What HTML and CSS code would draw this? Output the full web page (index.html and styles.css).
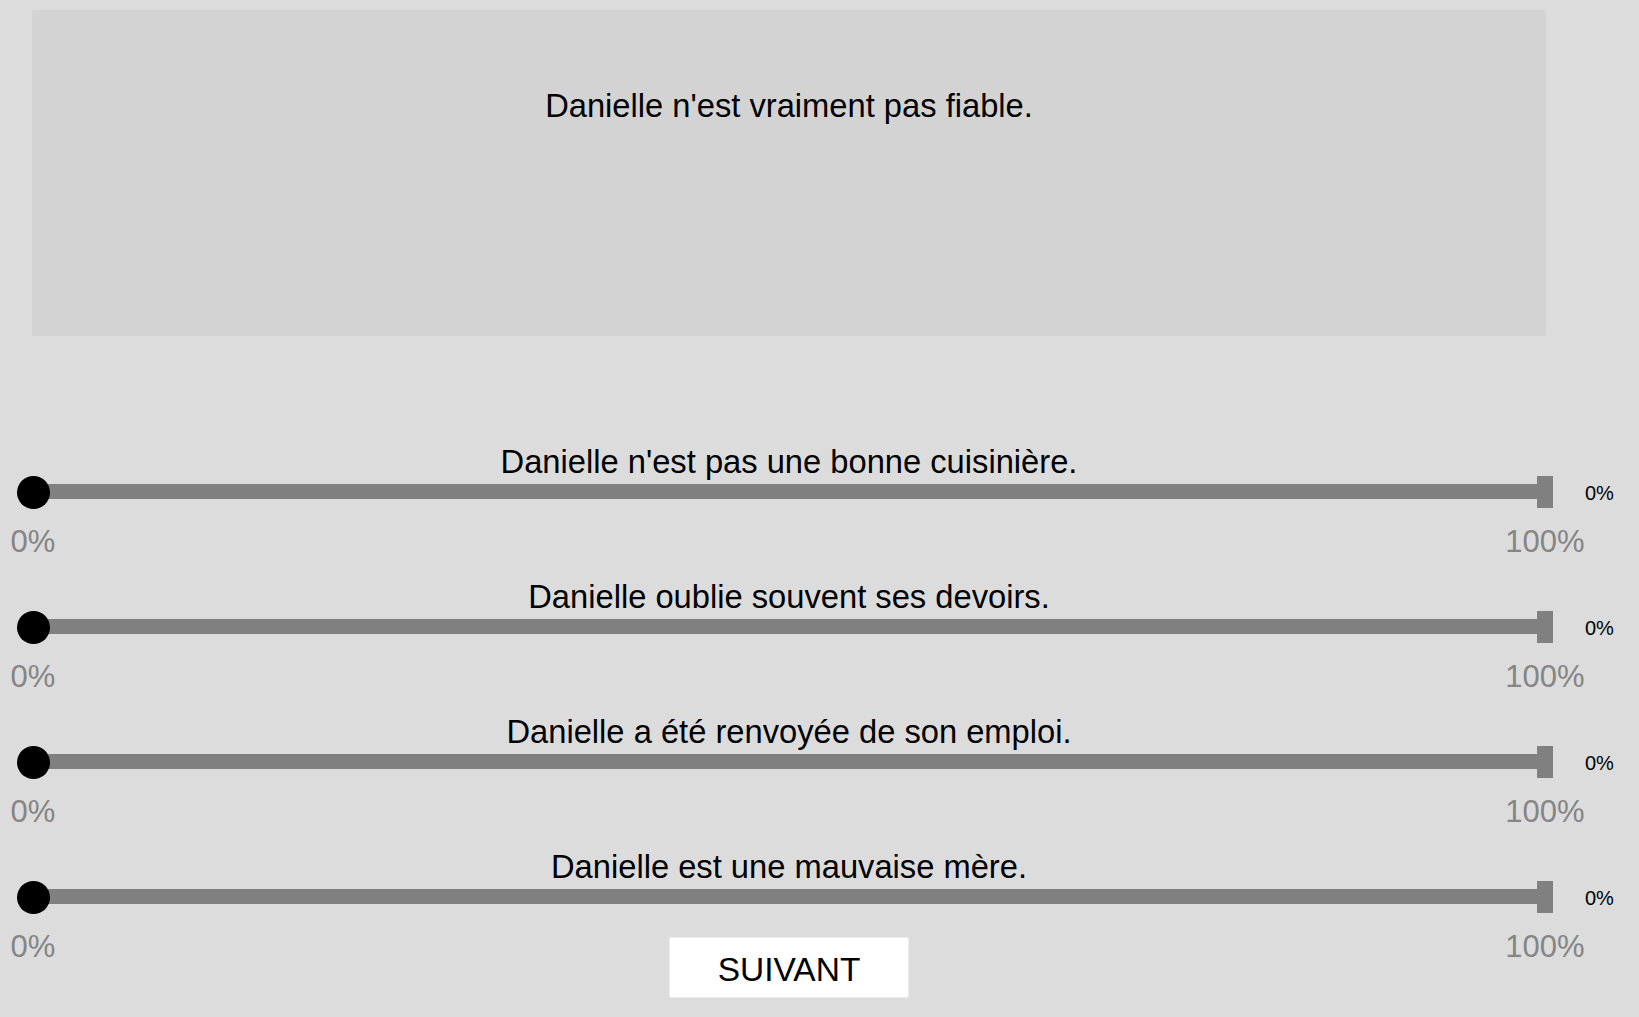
FILE: index.html
```html
<!DOCTYPE html>
<html lang="fr">
<head>
<meta charset="utf-8">
<title>Danielle</title>
<link rel="stylesheet" href="styles.css">
</head>
<body>
<main class="page">
  <section class="stimulus">
    <p class="stimulus-text">Danielle n'est vraiment pas fiable.</p>
  </section>

  <div class="questions">
    <div class="question">
      <div class="q-label">Danielle n'est pas une bonne cuisinière.</div>
      <div class="slider-row">
        <div class="slider">
          <div class="track"></div>
          <div class="knob"></div>
          <div class="endcap"></div>
          <span class="tick tick-min">0%</span>
          <span class="tick tick-max">100%</span>
        </div>
        <span class="value">0%</span>
      </div>
    </div>

    <div class="question">
      <div class="q-label">Danielle oublie souvent ses devoirs.</div>
      <div class="slider-row">
        <div class="slider">
          <div class="track"></div>
          <div class="knob"></div>
          <div class="endcap"></div>
          <span class="tick tick-min">0%</span>
          <span class="tick tick-max">100%</span>
        </div>
        <span class="value">0%</span>
      </div>
    </div>

    <div class="question">
      <div class="q-label">Danielle a été renvoyée de son emploi.</div>
      <div class="slider-row">
        <div class="slider">
          <div class="track"></div>
          <div class="knob"></div>
          <div class="endcap"></div>
          <span class="tick tick-min">0%</span>
          <span class="tick tick-max">100%</span>
        </div>
        <span class="value">0%</span>
      </div>
    </div>

    <div class="question">
      <div class="q-label">Danielle est une mauvaise mère.</div>
      <div class="slider-row">
        <div class="slider">
          <div class="track"></div>
          <div class="knob"></div>
          <div class="endcap"></div>
          <span class="tick tick-min">0%</span>
          <span class="tick tick-max">100%</span>
        </div>
        <span class="value">0%</span>
      </div>
    </div>
  </div>

  <div class="actions">
    <button class="next-btn" type="button">SUIVANT</button>
  </div>
</main>
</body>
</html>
```
FILE: styles.css
```css
html, body {
  margin: 0;
  padding: 0;
  background: #dcdcdc;
}

body {
  font-family: "Liberation Sans", Arial, sans-serif;
  color: #000;
  overflow: hidden;
}

.page {
  width: 1578px;
  padding-top: 10px;
}

.stimulus {
  margin: 0 32px;
  height: 326px;
  box-sizing: border-box;
  background: #d3d3d3;
  border-radius: 2px;
  padding-top: 77px;
}

.stimulus-text {
  margin: 0;
  text-align: center;
  font-size: 32.7px;
  line-height: 37px;
}

.questions {
  margin-top: 108px;
  display: flex;
  flex-direction: column;
  gap: 71px;
}

.q-label {
  text-align: center;
  font-size: 32.7px;
  line-height: 36px;
  height: 32px;
  white-space: nowrap;
}

.slider-row {
  display: flex;
  align-items: center;
  padding-left: 17px;
}

.slider {
  position: relative;
  width: 1544px;
  height: 32px;
  flex: none;
}

.track {
  position: absolute;
  left: 16px;
  right: 16px;
  top: 8px;
  height: 15px;
  background: #808080;
}

.knob {
  position: absolute;
  left: 0;
  top: -0.5px;
  width: 33px;
  height: 33px;
  border-radius: 50%;
  background: #000;
}

.endcap {
  position: absolute;
  left: 1520px;
  top: 0;
  width: 16px;
  height: 32px;
  background: #808080;
}

.tick {
  position: absolute;
  top: 48px;
  font-size: 31px;
  line-height: 36px;
  color: #858585;
  white-space: nowrap;
}

.tick-min {
  left: 16px;
  transform: translateX(-50%);
}

.tick-max {
  left: 1528px;
  transform: translateX(-50%);
}

.value {
  margin-left: 24px;
  font-size: 20px;
  line-height: 24px;
  padding-top: 1px;
}

.actions {
  display: flex;
  justify-content: center;
  margin-top: 24px;
}

.next-btn {
  width: 240px;
  height: 61px;
  background: #fff;
  border: 1px solid #ececec;
  border-radius: 2px;
  font-family: "Liberation Sans", Arial, sans-serif;
  font-size: 33.5px;
  color: #000;
  padding: 4px 0 0;
  cursor: pointer;
}
```
